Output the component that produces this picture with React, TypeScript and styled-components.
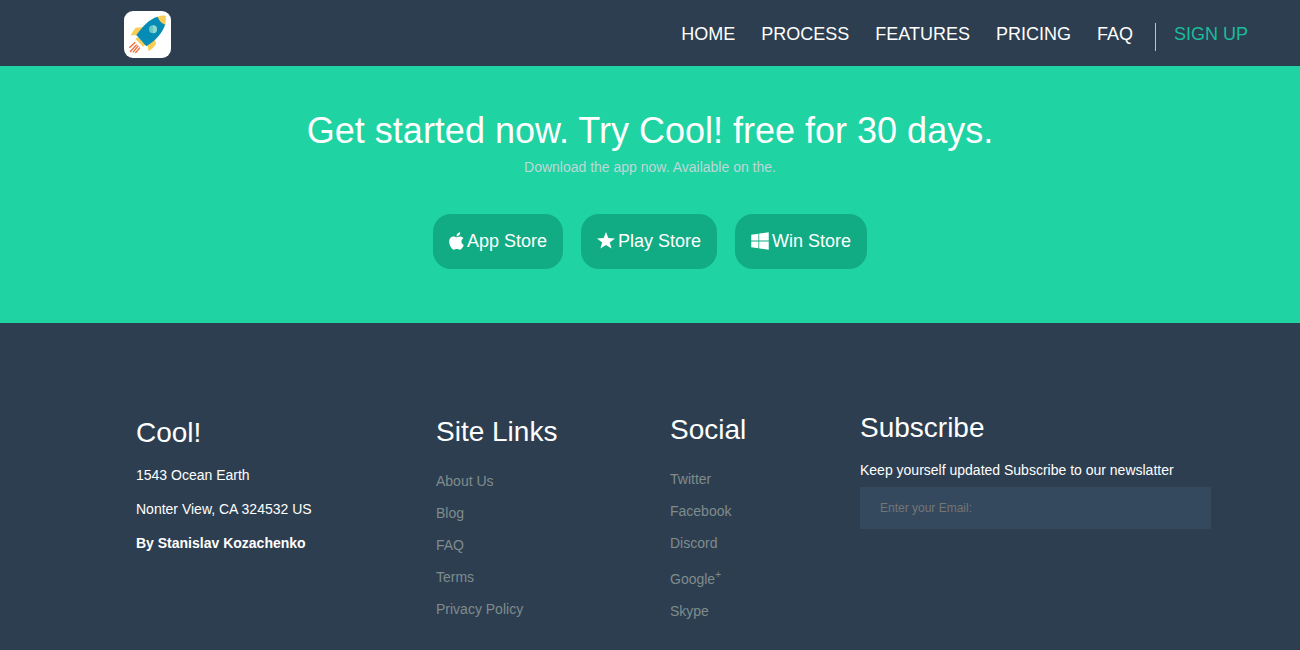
import React from "react";
import styled, { createGlobalStyle } from "styled-components";
import { FaApple, FaWindows } from "react-icons/fa";

const GlobalStyle = createGlobalStyle`
  * { box-sizing: border-box; }
  body {
    margin: 0;
    background: #2d3e50;
    color: #fff;
    font: 14px/20px "Liberation Sans", Arial, sans-serif;
  }
  h1, h2, p, ul { margin: 0; padding: 0; font-weight: 400; }
  ul { list-style: none; }
  a { text-decoration: none; }
`;

const Header = styled.header`
  display: flex;
  align-items: center;
  justify-content: space-between;
  height: 66px;
  padding: 2px 52px 0 124px;
`;

const LogoLink = styled.a`
  display: block;
  width: 47px;
  height: 47px;
  border-radius: 9px;
  background: #fff;
`;

const Nav = styled.nav`
  display: flex;
  align-items: center;
  gap: 26px;
`;

const NavLink = styled.a<{ $accent?: boolean }>`
  color: ${(p) => (p.$accent ? "#1abc9c" : "#fff")};
  font-size: 18px;
  line-height: 22px;
`;

const SignUp = styled.div`
  display: flex;
  align-items: flex-start;
  height: 28px;
  margin-top: 6px;
  margin-left: -4px;
  padding-left: 18px;
  border-left: 1px solid #bdc3c7;
`;

const Hero = styled.section`
  display: flex;
  flex-direction: column;
  align-items: center;
  padding: 43px 16px 54px;
  background: #1fd3a3;
  text-align: center;
`;

const Title = styled.h1`
  font-size: 36px;
  line-height: 44px;
`;

const Subtitle = styled.p`
  margin-top: 4px;
  color: #bdd8d8;
`;

const Stores = styled.div`
  display: flex;
  gap: 18px;
  margin-top: 37px;
`;

const StoreButton = styled.button`
  display: flex;
  align-items: center;
  gap: 3px;
  height: 55px;
  padding: 0 16px 2px;
  border: 0;
  border-radius: 18px;
  background: #11ac84;
  color: #fff;
  font: 18px/24px "Liberation Sans", Arial, sans-serif;
  cursor: pointer;
`;

const StoreIcon = styled.span<{ $width: number }>`
  display: flex;
  width: ${(p) => p.$width}px;

  svg { width: 100%; height: 20px; }
`;

const Footer = styled.footer`
  display: grid;
  grid-template-columns: 300fr 234fr 190fr 351fr;
  align-items: center;
  padding: 85px 89px 28px 136px;
`;

const Column = styled.section<{ $space?: number }>`
  padding-bottom: ${(p) => p.$space ?? 0}px;
`;

const Heading = styled.h2`
  font-size: 28px;
  line-height: 40px;
`;

const Lines = styled.div`
  display: flex;
  flex-direction: column;
  gap: 14px;
  margin-top: 12px;
`;

const Links = styled.ul`
  margin-top: 13px;

  li { padding: 6px 0; }
  a { color: #7f8c8d; }
  sup { font-size: 10px; line-height: 20px; }
`;

const EmailInput = styled.input`
  display: block;
  width: 100%;
  height: 42px;
  margin-top: 7px;
  padding: 0 20px;
  border: 0;
  border-radius: 0;
  background: #34495e;
  color: #fff;
  font: 12px "Liberation Sans", Arial, sans-serif;

  &::placeholder { color: #757575; }
`;

const SubscribeLabel = styled.label`
  display: block;
  margin-top: 12px;
`;

const Rocket = () => (
  <svg viewBox="0 0 141 141" width="47" height="47" aria-hidden="true">
    <path d="M62 48 35 50Q27 59 20 73L44 73Z" fill="#f7cd55" />
    <path d="M91 74 96 99Q88 113 74 121L69 96Z" fill="#f7cd55" />
    <path d="M41 78 64 100 58 108 34 84Z" fill="#f7cd55" />
    <path d="M37 72C56 46 76 24 101 17L124 40C116 65 94 90 67 106Z" fill="#058bb5" />
    <path d="M101 17Q112 13 125 14Q127 28 124 41Q107 35 101 17Z" fill="#f7cd55" />
    <circle cx="87" cy="55" r="12" fill="#66c7c5" />
    <path d="M87 43A12 12 0 0 1 87 67Z" fill="#8bd7d1" />
    <path d="M34 94 16 110M38 101 18 123M43 104 27 124M48 110 34 126" stroke="#f06a38" strokeWidth="4" />
  </svg>
);

const Star = () => (
  <svg viewBox="0 0 18 18" fill="currentColor" aria-hidden="true">
    <path d="M9 0 11.3 6.1 18 6.4 12.8 10.4 14.6 16.6 9 13 3.4 16.6 5.2 10.4 0 6.4 6.7 6.1Z" />
  </svg>
);

const navItems = ["Home", "Process", "Features", "Pricing", "FAQ"];
const stores = [
  { name: "App Store", Icon: FaApple, width: 15 },
  { name: "Play Store", Icon: Star, width: 18 },
  { name: "Win Store", Icon: FaWindows, width: 18 },
];
const siteLinks = ["About Us", "Blog", "FAQ", "Terms", "Privacy Policy"];

export default function App() {
  return (
    <>
      <GlobalStyle />
      <Header>
        <LogoLink href="#" aria-label="Cool!">
          <Rocket />
        </LogoLink>
        <Nav>
          {navItems.map((item) => (
            <NavLink key={item} href={`#${item.toLowerCase()}`}>{item.toUpperCase()}</NavLink>
          ))}
          <SignUp>
            <NavLink $accent href="#signup">SIGN UP</NavLink>
          </SignUp>
        </Nav>
      </Header>
      <main>
        <Hero>
          <Title>Get started now. Try Cool! free for 30 days.</Title>
          <Subtitle>Download the app now. Available on the.</Subtitle>
          <Stores>
            {stores.map(({ name, Icon, width }) => (
              <StoreButton key={name} type="button">
                <StoreIcon $width={width}><Icon /></StoreIcon>
                {name}
              </StoreButton>
            ))}
          </Stores>
        </Hero>
      </main>
      <Footer>
        <Column $space={72}>
          <Heading>Cool!</Heading>
          <Lines>
            <p>1543 Ocean Earth</p>
            <p>Nonter View, CA 324532 US</p>
            <strong>By Stanislav Kozachenko</strong>
          </Lines>
        </Column>
        <Column>
          <Heading>Site Links</Heading>
          <Links>
            {siteLinks.map((link) => (
              <li key={link}><a href="#">{link}</a></li>
            ))}
          </Links>
        </Column>
        <Column>
          <Heading>Social</Heading>
          <Links>
            <li><a href="#">Twitter</a></li>
            <li><a href="#">Facebook</a></li>
            <li><a href="#">Discord</a></li>
            <li><a href="#">Google<sup>+</sup></a></li>
            <li><a href="#">Skype</a></li>
          </Links>
        </Column>
        <Column $space={100}>
          <Heading>Subscribe</Heading>
          <SubscribeLabel htmlFor="email">Keep yourself updated Subscribe to our newslatter</SubscribeLabel>
          <EmailInput id="email" type="email" placeholder="Enter your Email:" />
        </Column>
      </Footer>
    </>
  );
}
